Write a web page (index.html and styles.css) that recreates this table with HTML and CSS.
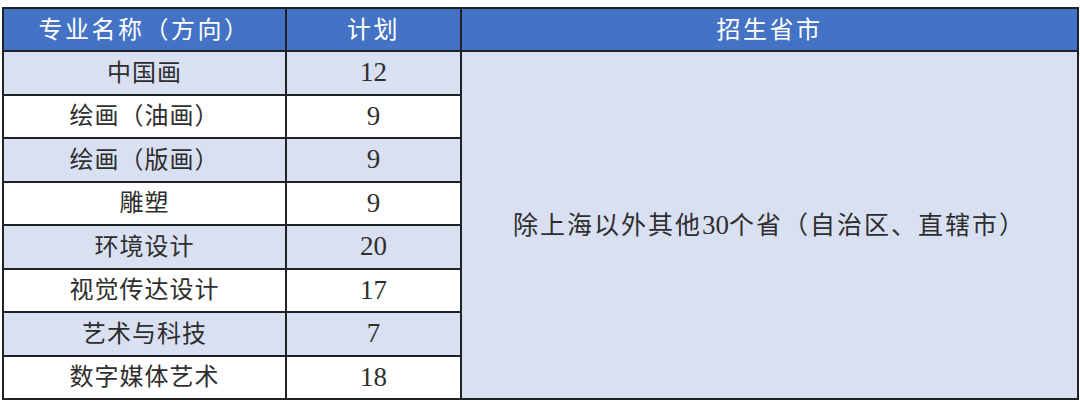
FILE: index.html
```html
<!DOCTYPE html>
<html lang="zh-CN">
<head>
<meta charset="utf-8">
<link rel="stylesheet" href="styles.css">
</head>
<body>
<div class="wrap">
<table class="plan">
  <colgroup>
    <col class="c-name">
    <col class="c-num">
    <col class="c-prov">
  </colgroup>
  <thead>
    <tr><th>专业名称（方向）</th><th>计划</th><th>招生省市</th></tr>
  </thead>
  <tbody>
    <tr class="alt"><td>中国画</td><td class="num">12</td><td class="prov" rowspan="8">除上海以外其他<span class="digits">30</span>个省（自治区、直辖市）</td></tr>
    <tr><td>绘画（油画）</td><td class="num">9</td></tr>
    <tr class="alt"><td>绘画（版画）</td><td class="num">9</td></tr>
    <tr><td>雕塑</td><td class="num">9</td></tr>
    <tr class="alt"><td>环境设计</td><td class="num">20</td></tr>
    <tr><td>视觉传达设计</td><td class="num">17</td></tr>
    <tr class="alt"><td>艺术与科技</td><td class="num">7</td></tr>
    <tr><td>数字媒体艺术</td><td class="num">18</td></tr>
  </tbody>
</table>
</div>
</body>
</html>
```

FILE: styles.css
```css
html, body {
  margin: 0;
  padding: 0;
  background: #ffffff;
}
.wrap {
  padding: 7px 3px 0 2px;
}
.plan {
  width: 1075px;
  border-collapse: collapse;
  table-layout: fixed;
  font-family: "Liberation Serif", "Noto Sans CJK SC", serif;
  color: #2e2e2e;
}
.c-name { width: 283px; }
.c-num { width: 175px; }
.c-prov { width: 617px; }
.plan th,
.plan td {
  border: 2px solid #1f2328;
  text-align: center;
  vertical-align: middle;
  padding: 0;
  font-size: 24px;
  line-height: 1;
  letter-spacing: 1px;
  font-weight: normal;
}
.plan th {
  background: #4472c4;
  color: #ffffff;
  height: 41px;
  letter-spacing: 2.5px;
}
.plan td {
  height: 41.5px;
  background: #ffffff;
}
.plan tr.alt td {
  background: #d9e0f2;
}
.plan td.num {
  font-size: 27px;
  letter-spacing: 0;
}
.plan td.prov {
  background: #d9e0f2;
  font-size: 25px;
  letter-spacing: 2px;
}
.digits {
  font-size: 27px;
  letter-spacing: 0;
}
```
